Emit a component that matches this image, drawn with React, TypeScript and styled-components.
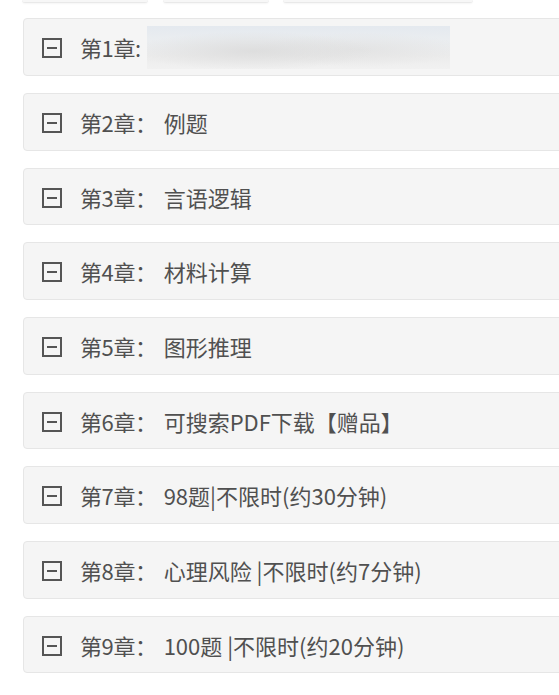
import React from "react";
import styled, { createGlobalStyle } from "styled-components";

const Global = createGlobalStyle`
  html, body { margin: 0; padding: 0; background: #ffffff; overflow: hidden; }
  body { font-family: "Noto Sans CJK SC", "Noto Sans", sans-serif; }
`;

const Page = styled.div`
  width: 559px;
  height: 695px;
  overflow: hidden;
  background: #fff;
`;

const TabRow = styled.div`
  display: flex;
  height: 3px;
`;

const TabStub = styled.div<{ $left: number; $width: number }>`
  margin-left: ${(p) => p.$left}px;
  width: ${(p) => p.$width}px;
  height: 2px;
  background: #f7f7f7;
  border-bottom: 1px solid #e9e9e9;
  border-radius: 0 0 4px 4px;
  box-shadow: 0 1px 2px rgba(0, 0, 0, 0.04);
`;

const List = styled.div`
  display: flex;
  flex-direction: column;
  gap: 17px;
  padding: 15.3px 0 0 23px;
  width: 580px;
`;

const Card = styled.div`
  box-sizing: border-box;
  height: 57.7px;
  display: flex;
  align-items: center;
  background: #f5f5f5;
  border: 1px solid #e6e6e6;
  border-radius: 4px;
  padding-left: 18px;
  color: #505050;
  font-size: 22px;
  line-height: 1;
  white-space: nowrap;
`;

const Icon = styled.svg`
  width: 20px;
  height: 20px;
  flex: none;
  margin-top: 2px;
  margin-right: 18px;
`;

const Label = styled.span`
  letter-spacing: -0.4px;
`;

const Title = styled.span`
  margin-left: 7px;
`;

const Blur = styled.span`
  display: block;
  width: 303px;
  height: 43px;
  margin-left: 6px;
  background:
    radial-gradient(ellipse 40% 45% at 35% 58%, rgba(218, 218, 218, 0.8), rgba(218, 218, 218, 0) 100%),
    radial-gradient(ellipse 35% 40% at 70% 55%, rgba(224, 224, 224, 0.7), rgba(224, 224, 224, 0) 100%),
    linear-gradient(180deg, #e4e9ef 0%, #eaedf0 30%, #ececec 70%, #f1f1f1 100%);
`;

const MinusBox = () => (
  <Icon viewBox="0 0 20 20" aria-hidden>
    <rect x="1" y="1" width="18" height="18" fill="none" stroke="#555" strokeWidth="2" />
    <rect x="5" y="9" width="10" height="2" fill="#555" />
  </Icon>
);

const chapters: { n: number; title: string }[] = [
  { n: 2, title: "例题" },
  { n: 3, title: "言语逻辑" },
  { n: 4, title: "材料计算" },
  { n: 5, title: "图形推理" },
  { n: 6, title: "可搜索PDF下载【赠品】" },
  { n: 7, title: "98题|不限时(约30分钟)" },
  { n: 8, title: "心理风险 |不限时(约7分钟)" },
  { n: 9, title: "100题 |不限时(约20分钟)" },
];

export default function App() {
  return (
    <Page>
      <Global />
      <TabRow>
        <TabStub $left={22} $width={126} />
        <TabStub $left={15} $width={106} />
        <TabStub $left={14} $width={190} />
      </TabRow>
      <List>
        <Card>
          <MinusBox />
          <Label>第1章:</Label>
          <Blur />
        </Card>
        {chapters.map((c) => (
          <Card key={c.n}>
            <MinusBox />
            <Label>第{c.n}章：</Label>
            <Title>{c.title}</Title>
          </Card>
        ))}
      </List>
    </Page>
  );
}
